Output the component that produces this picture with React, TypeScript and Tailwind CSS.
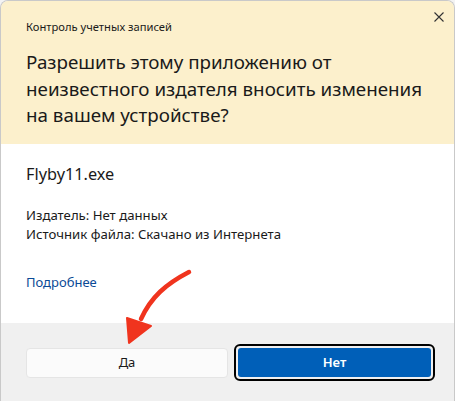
import React from "react";

export default function App() {
  return (
    <div
      className="w-[455px] h-[401px] overflow-hidden bg-[#f3f3f3]"
      style={{ fontFamily: '"Segoe UI", "Noto Sans", "Open Sans", sans-serif' }}
    >
      <div className="relative w-[455px] h-[401px] flex flex-col rounded-t-[8px] border border-b-0 border-[#c9c9c9] overflow-hidden">
        <div className="bg-[#fcf0cc] h-[143px] pl-[25px] pr-[10px] pt-[16px] flex flex-col shrink-0">
          <div className="text-[11.2px] leading-[20px] text-[#1a1a1a] whitespace-nowrap">Контроль учетных записей</div>
          <div className="mt-[12px] text-[18.8px] leading-[26.5px] text-[#1a1a1a] whitespace-nowrap">
            Разрешить этому приложению от
            <br />
            неизвестного издателя вносить изменения
            <br />
            на вашем устройстве?
          </div>
          <svg className="absolute left-[433px] top-[11px]" width="10" height="10" viewBox="0 0 10 10">
            <path d="M0.5 0.5 L9.5 9.5 M9.5 0.5 L0.5 9.5" stroke="#333" strokeWidth="1.1" />
          </svg>
        </div>
        <div className="bg-white h-[179px] pl-[25px] pt-[18px] shrink-0 flex flex-col">
          <div className="text-[16.3px] leading-[24px] text-[#1a1a1a]">Flyby11.exe</div>
          <div className="mt-[20px] text-[13.2px] leading-[19px] text-[#1a1a1a]">
            <div>Издатель: Нет данных</div>
            <div>Источник файла: Скачано из Интернета</div>
          </div>
          <div className="mt-[29px] text-[13px] leading-[19px] text-[#0b4a96]">Подробнее</div>
        </div>
        <div className="flex-1 bg-[#f0f0f0] flex gap-[6px] pl-[25px] pt-[21px]">
          <div className="w-[202px] h-[30px] mt-[4px] rounded-[4px] bg-[#fbfbfb] border border-[#e5e5e5] flex items-center justify-center text-[13px] text-[#1a1a1a]">
            Да
          </div>
          <div className="w-[201px] h-[37px] rounded-[6px] border-[2px] border-black p-[2px]">
            <div className="w-full h-full rounded-[3px] bg-[#005fb8] flex items-center justify-center text-[13px] font-semibold text-white">
              Нет
            </div>
          </div>
        </div>
        <svg className="absolute left-0 top-0 pointer-events-none" width="455" height="401" viewBox="0 0 455 401">
          <path d="M188 271 C165 283 150 296 140 318" stroke="#f0341e" strokeWidth="4.5" fill="none" strokeLinecap="round" />
          <polygon points="128,342 126,317 150,325" fill="#f0341e" stroke="#f0341e" strokeWidth="2" strokeLinejoin="round" />
        </svg>
      </div>
    </div>
  );
}
